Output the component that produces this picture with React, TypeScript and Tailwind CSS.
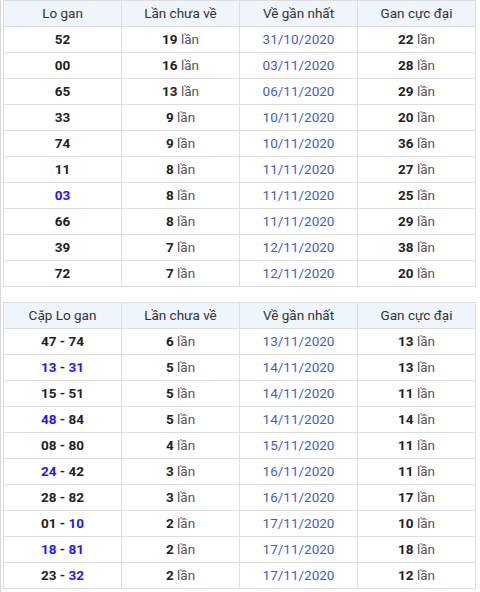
import React from "react";

type Part = { text: string; blue?: boolean };

interface Row {
  num: Part[];
  miss: number;
  last: string;
  max: number;
}

const single: Row[] = [
  { num: [{ text: "52" }], miss: 19, last: "31/10/2020", max: 22 },
  { num: [{ text: "00" }], miss: 16, last: "03/11/2020", max: 28 },
  { num: [{ text: "65" }], miss: 13, last: "06/11/2020", max: 29 },
  { num: [{ text: "33" }], miss: 9, last: "10/11/2020", max: 20 },
  { num: [{ text: "74" }], miss: 9, last: "10/11/2020", max: 36 },
  { num: [{ text: "11" }], miss: 8, last: "11/11/2020", max: 27 },
  { num: [{ text: "03", blue: true }], miss: 8, last: "11/11/2020", max: 25 },
  { num: [{ text: "66" }], miss: 8, last: "11/11/2020", max: 29 },
  { num: [{ text: "39" }], miss: 7, last: "12/11/2020", max: 38 },
  { num: [{ text: "72" }], miss: 7, last: "12/11/2020", max: 20 },
];

const pairs: Row[] = [
  { num: [{ text: "47" }, { text: " - " }, { text: "74" }], miss: 6, last: "13/11/2020", max: 13 },
  { num: [{ text: "13", blue: true }, { text: " - " }, { text: "31", blue: true }], miss: 5, last: "14/11/2020", max: 13 },
  { num: [{ text: "15" }, { text: " - " }, { text: "51" }], miss: 5, last: "14/11/2020", max: 11 },
  { num: [{ text: "48", blue: true }, { text: " - " }, { text: "84" }], miss: 5, last: "14/11/2020", max: 14 },
  { num: [{ text: "08" }, { text: " - " }, { text: "80" }], miss: 4, last: "15/11/2020", max: 11 },
  { num: [{ text: "24", blue: true }, { text: " - " }, { text: "42" }], miss: 3, last: "16/11/2020", max: 11 },
  { num: [{ text: "28" }, { text: " - " }, { text: "82" }], miss: 3, last: "16/11/2020", max: 17 },
  { num: [{ text: "01" }, { text: " - " }, { text: "10", blue: true }], miss: 2, last: "17/11/2020", max: 10 },
  { num: [{ text: "18", blue: true }, { text: " - " }, { text: "81", blue: true }], miss: 2, last: "17/11/2020", max: 18 },
  { num: [{ text: "23" }, { text: " - " }, { text: "32", blue: true }], miss: 2, last: "17/11/2020", max: 12 },
];

function Count({ n }: { n: number }) {
  return (
    <>
      <b className="font-bold text-[#222]">{n}</b>{" "}
      <span className="text-[#555]">lần</span>
    </>
  );
}

function GanTable({ title, rows }: { title: string; rows: Row[] }) {
  const th = "h-[26px] border border-[#dedede] font-normal text-[#333]";
  const td = "h-[26px] border border-[#dedede] text-center";
  return (
    <table className="w-[473px] table-fixed border-collapse text-[13.5px]">
      <thead>
        <tr className="bg-[#eef5fd]">
          <th className={th}>{title}</th>
          <th className={th}>Lần chưa về</th>
          <th className={th}>Về gần nhất</th>
          <th className={th}>Gan cực đại</th>
        </tr>
      </thead>
      <tbody>
        {rows.map((r, i) => (
          <tr key={i} className="bg-white">
            <td className={td + " font-bold text-[#222]"}>
              {r.num.map((p, j) => (
                <span key={j} className={p.blue ? "text-[#1a1af0]" : ""}>
                  {p.text}
                </span>
              ))}
            </td>
            <td className={td}>
              <Count n={r.miss} />
            </td>
            <td className={td + " text-[#3f5fc4]"}>{r.last}</td>
            <td className={td}>
              <Count n={r.max} />
            </td>
          </tr>
        ))}
      </tbody>
    </table>
  );
}

export default function App() {
  return (
    <div
      className="flex h-[592px] w-[480px] flex-col gap-[15px] border-l border-[#d8d8d8] bg-white pl-[2px]"
      style={{ fontFamily: "Roboto, 'Liberation Sans', sans-serif" }}
    >
      <GanTable title="Lo gan" rows={single} />
      <GanTable title="Cặp Lo gan" rows={pairs} />
    </div>
  );
}
